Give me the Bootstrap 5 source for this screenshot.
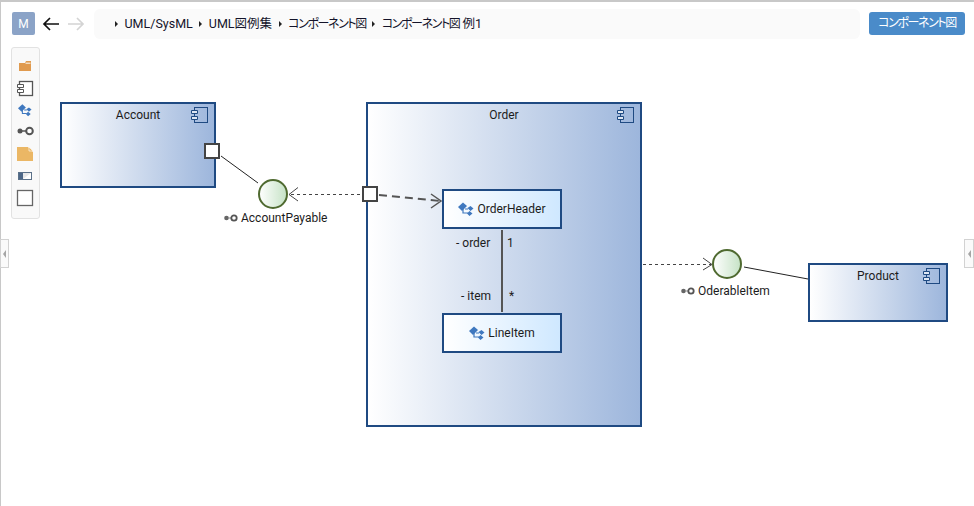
<!DOCTYPE html>
<html lang="ja"><head><meta charset="utf-8"><title>コンポーネント図 例1</title>
<link href="https://cdn.jsdelivr.net/npm/bootstrap@5.3.0/dist/css/bootstrap.min.css" rel="stylesheet">
<style>
html,body{height:100%;overflow:hidden;background:#fff}
body{font-family:Roboto,"Noto Sans CJK JP",sans-serif;font-size:12px;color:#1c1c1c;line-height:16px;font-feature-settings:"palt"}
.shell{width:974px;height:506px;border-top:2px solid #c8c8c8;border-left:1px solid #c8c8c8;position:relative}
.topbar{height:45px;padding:10px 9px 0 11px;gap:9px}
.logo-m{width:23px;height:23px;border-radius:2px;background:#8ba3c7;color:#fff;font-size:12px}
.back-arrow{margin-top:5px;margin-left:-2px}
.fwd-arrow{margin-top:5px;margin-left:-2px}
.crumbs{width:766px;height:30px;margin-top:-3px;margin-left:0;border-radius:6px;background:#fafafa;padding-left:21px;font-size:12.5px;color:#14142a;gap:6.5px}
.tri{width:0;height:0;border-left:3px solid #222;border-top:3px solid transparent;border-bottom:3px solid transparent}
.kana{font-size:12px;letter-spacing:-1.4px}
.type-btn{width:96px;height:23px;padding:0;border:0;border-radius:3px;background:#4a8bc9;color:#fff;font-size:12px;line-height:23px;white-space:nowrap;letter-spacing:-1.4px;font-feature-settings:"palt"}
.stage{position:relative;height:459px}
.stage svg.wires{position:absolute;left:-1px;top:-47px;width:974px;height:506px;pointer-events:none;z-index:3}
.palette{position:absolute;left:10px;top:0;width:29px;height:172px;background:#f9f9f9;border:1px solid #e2e2e2;border-radius:3px}
.grip{position:absolute;top:192px;width:9px;height:29px;background:#fafafa;border:1px solid #d2d2d2;display:flex;align-items:center;justify-content:center}
.grip i{border-right:3px solid #a5a5a5;border-top:4px solid transparent;border-bottom:4px solid transparent}
.grip-l{left:-1px}.grip-r{left:963px;width:10px}
.comp{position:absolute;border:2px solid #1f4a82;background:linear-gradient(90deg,#fff,#9db6dc);text-align:center}
.comp-name{display:block;padding-top:3px}
.comp-icon{position:absolute;right:6px;top:3px}
.comp-account{left:59px;top:55px;width:156px;height:86px}
.comp-order{left:365px;top:55px;width:276px;height:325px}
.comp-product{left:807px;top:216px;width:140px;height:59px}
.klass{position:absolute;width:120px;height:40px;border:2px solid #1f4a82;background:linear-gradient(90deg,#fff,#cfe8ff);z-index:4;gap:3px}
.klass-head{left:441px;top:142px}
.klass-line{left:441px;top:266px}
.lbl{position:absolute;white-space:nowrap;z-index:5}
.l-order{left:455px;top:188px}.l-one{left:506px;top:188px}
.l-item{left:460px;top:241px}.l-star{left:508px;top:241px}
.l-pay{left:223px;top:163px;gap:3px}.l-ode{left:680px;top:236px;gap:3px}
</style></head><body>
<svg width="0" height="0" class="d-block position-absolute"><defs>
  <symbol id="ic-comp" viewBox="0 0 17 16"><rect x="3.500" y=".5" width="13" height="15" fill="none" stroke="#1f4a82"/><path d="M.5 3.500h6v3h-6zM.5 9.500h6v3h-6z" fill="#dfe7f3" stroke="#1f4a82"/></symbol>
  <symbol id="ic-class" viewBox="0 0 16 16"><path d="M0 6 5 1.500 9 5 4 10z" fill="#3f78bf"/><path d="M5 6v6h5M7 8h3" fill="none" stroke="#3f78bf" stroke-width="1.200"/><path d="M9.500 7 12.500 5 15.500 7.500 12.500 10zM9 12.500 11.500 10 14.500 12.500 11.500 15z" fill="#3f78bf"/></symbol>
  <symbol id="ic-lolly" viewBox="0 0 14 8"><circle cx="2.500" cy="4" r="2.300" fill="#666"/><path d="M4 4h5" stroke="#888"/><circle cx="10" cy="4" r="2.700" fill="#fff" stroke="#555" stroke-width="1.800"/></symbol>
</defs></svg>
<div class="shell">
  <div class="topbar d-flex align-items-start">
    <div class="logo-m d-flex align-items-center justify-content-center">M</div>
    <svg width="18" height="14" viewBox="0 0 18 14" class="back-arrow"><path d="M17 7H2M8 1 2 7l6 6" fill="none" stroke="#111" stroke-width="1.7"/></svg>
    <svg width="18" height="14" viewBox="0 0 18 14" class="fwd-arrow"><path d="M1 7h15M10 1l6 6-6 6" fill="none" stroke="#d4d4d4" stroke-width="1.7"/></svg>
    <nav class="crumbs d-flex align-items-center">
      <i class="tri"></i><span>UML/SysML</span><i class="tri"></i><span>UML図例集</span><i class="tri"></i><span class="kana">コンポーネント図</span><i class="tri"></i><span><span class="kana">コンポーネント図</span> 例1</span>
    </nav>
    <button class="btn type-btn" type="button">コンポーネント図</button>
  </div>
  <div class="stage">
    <div class="palette d-flex flex-column align-items-center">
      <svg width="27" height="170" viewBox="0 0 27 170">
        <path d="M7 15h6l1-2h5v10H7z" fill="#e09a4e"/><path d="M13.500 14.500h5v1.500h-5z" fill="#f3dcc0"/>
        <rect x="7.500" y="33.500" width="13" height="14" fill="#fff" stroke="#555" stroke-width="1.300"/><path d="M5.500 36.500h6v3h-6zM5.500 41.500h6v3h-6z" fill="#fff" stroke="#555"/>
        <use href="#ic-class" x="6" y="55" width="14" height="14"/>
        <circle cx="8" cy="83" r="2.500" fill="#555"/><path d="M10 83h5" stroke="#555" stroke-width="1.500"/><circle cx="17.500" cy="83" r="3.300" fill="#fff" stroke="#555" stroke-width="2"/>
        <path d="M5 99h11l5 5v9H5z" fill="#ebb765"/><path d="M17 99l4 4h-4z" fill="#ebb765" stroke="#fff" stroke-width=".6"/>
        <rect x="6.500" y="124.500" width="13" height="7" fill="#e8e8e8" stroke="#5b7189"/><path d="M7 125h4v6H7z" fill="#4d6787"/><path d="M11 131l8-6v6z" fill="#fff"/>
        <rect x="5.500" y="142.500" width="15" height="15" fill="#fff" stroke="#666" stroke-width="1.300"/>
      </svg>
    </div>
    <div class="grip grip-l"><i></i></div>
    <div class="grip grip-r"><i></i></div>

    <div class="comp comp-account"><span class="comp-name">Account</span><svg class="comp-icon" width="17" height="16"><use href="#ic-comp"/></svg></div>
    <div class="comp comp-order"><span class="comp-name">Order</span><svg class="comp-icon" width="17" height="16"><use href="#ic-comp"/></svg></div>
    <div class="comp comp-product"><span class="comp-name">Product</span><svg class="comp-icon" width="17" height="16"><use href="#ic-comp"/></svg></div>

    <div class="klass klass-head d-flex align-items-center justify-content-center"><svg width="16" height="16"><use href="#ic-class"/></svg><span>OrderHeader</span></div>
    <div class="klass klass-line d-flex align-items-center justify-content-center"><svg width="16" height="16"><use href="#ic-class"/></svg><span>LineItem</span></div>

    <span class="lbl l-order">- order</span>
    <span class="lbl l-one">1</span>
    <span class="lbl l-item">- item</span>
    <span class="lbl l-star">*</span>

    <span class="lbl l-pay d-flex align-items-center"><svg width="14" height="8"><use href="#ic-lolly"/></svg>AccountPayable</span>
    <span class="lbl l-ode d-flex align-items-center"><svg width="14" height="8"><use href="#ic-lolly"/></svg>OderableItem</span>

    <svg class="wires" viewBox="0 0 974 506">
      <defs><linearGradient id="lolly"><stop offset="0" stop-color="#fff"/><stop offset="1" stop-color="#c5e2c5"/></linearGradient></defs>
      <path d="M221 156 258 183" stroke="#222" fill="none"/>
      <path d="M744 267 808 279" stroke="#222" fill="none"/>
      <path d="M502 230V312" stroke="#555" stroke-width="2" fill="none"/>
      <path d="M291 194.500H362" stroke="#444" stroke-dasharray="3 3" fill="none"/>
      <path d="M298 187.500 289 194.500 298 201" stroke="#444" fill="none"/>
      <path d="M643 264.500H711" stroke="#444" stroke-dasharray="3 3" fill="none"/>
      <path d="M703 258 712 264.500 703 270" stroke="#444" fill="none"/>
      <path d="M379 195 440 201" stroke="#555" stroke-width="2" stroke-dasharray="8 5" fill="none"/>
      <path d="M431 194 441 201 431 208" stroke="#555" stroke-width="1.500" fill="none"/>
      <circle cx="273" cy="194" r="14" fill="url(#lolly)" stroke="#4f6a30" stroke-width="2"/>
      <circle cx="727" cy="264" r="14" fill="url(#lolly)" stroke="#4f6a30" stroke-width="2"/>
      <rect x="205" y="144" width="14" height="14" fill="#fff" stroke="#444" stroke-width="2"/>
      <rect x="363" y="187" width="14" height="14" fill="#fff" stroke="#444" stroke-width="2"/>
    </svg>
  </div>
</div>
<script src="https://cdn.jsdelivr.net/npm/bootstrap@5.3.0/dist/js/bootstrap.bundle.min.js"></script>
</body></html>
